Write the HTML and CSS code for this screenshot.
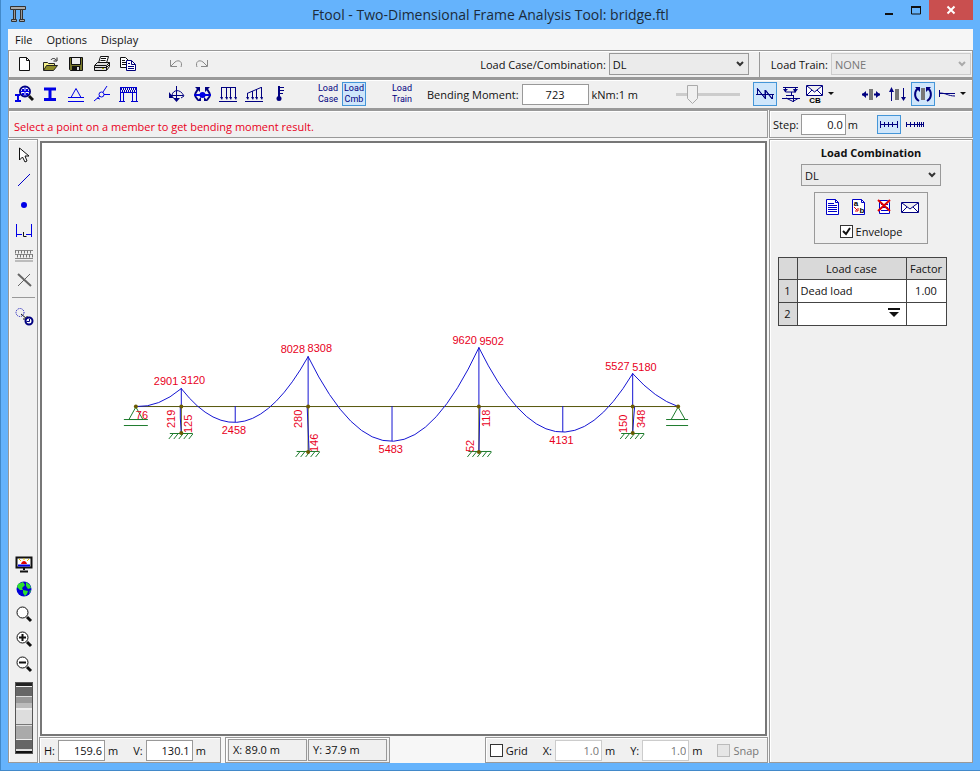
FILE: index.html
```html
<!DOCTYPE html>
<html lang="en">

<head>
    <meta charset="UTF-8">
    <meta name="viewport" content="width=device-width, initial-scale=1.0">
    <title>Ftool - bridge.ftl</title>
    <link rel="stylesheet" href="styles.css">
</head>

<body>

    <header class="titlebar">
        <svg class="logo" width="18" height="18" viewBox="0 0 18 18">
            <path d="M1.500 1.500h15v3h-15z" fill="#aaa" stroke="#333" />
            <path d="M4.500 4.500h2v10h-2zM11.500 4.500h2v10h-2z" fill="#999" stroke="#333" />
            <path d="M2.500 14.500h5v2h-5zM10.500 14.500h5v2h-5z" fill="#aaa" stroke="#333" />
        </svg>
        <h1>Ftool - Two-Dimensional Frame Analysis Tool: bridge.ftl</h1>
        <div class="window-buttons">
            <button type="button" aria-label="Minimize"><svg width="12" height="12"><path d="M2 10h8" stroke="#111" stroke-width="2" /></svg></button>
            <button type="button" aria-label="Maximize"><svg width="12" height="12"><path d="M1.500 3v7h9V3z" fill="none" stroke="#111" /><path d="M1 3h10" stroke="#111" stroke-width="2" /></svg></button>
            <button type="button" class="close" aria-label="Close"><svg width="10" height="10"><path d="M1.500 1.500l7 7M8.500 1.500l-7 7" stroke="#fff" stroke-width="2" /></svg></button>
        </div>
    </header>

    <nav class="menubar">
        <button type="button">File</button>
        <button type="button">Options</button>
        <button type="button">Display</button>
    </nav>

    <div class="toolbar file-bar">
        <div class="group">
            <button type="button" class="tool" aria-label="New"><svg width="20" height="20"><path d="M5.500 3.500h7l3 3v10h-10z" fill="#fff" stroke="#111" /><path d="M12.500 3.500v3h3" fill="none" stroke="#111" /></svg></button>
            <button type="button" class="tool" aria-label="Open"><svg width="20" height="20"><path d="M3.500 16V8.500h4l1 1h6V12" fill="#f4f08a" stroke="#222" /><path d="M3.500 16.500l3-5h11l-4 5z" fill="#8c8a28" stroke="#222" /><path d="M11 6c1-2 4-2 5 0M17 3.500v3.500h-3.500" fill="none" stroke="#222" /></svg></button>
            <button type="button" class="tool" aria-label="Save"><svg width="20" height="20"><path d="M3.500 3.500h13v13H4.500l-1-1z" fill="#77772b" stroke="#111" /><path d="M6 4h8v6H6z" fill="#eee" /><path d="M5.500 4v6.500h9V4" fill="none" stroke="#111" /><path d="M6 12h8v4H6z" fill="#111" /><path d="M11 13h2v3h-2z" fill="#ddd" /></svg></button>
            <button type="button" class="tool" aria-label="Print"><svg width="20" height="20"><path d="M6.500 9l2-6.500h8L14.500 9" fill="#fff" stroke="#111" /><path d="M9 4.500h5M8.500 6.500h5" stroke="#111" /><path d="M2.500 11.500l3-3h12v4l-3 4h-12z" fill="#ddd" stroke="#111" /><path d="M3 11.500h11.500l3-3M3 13.500h11.500l3-3M14.500 12v4" fill="none" stroke="#111" /><path d="M10 14.500h2" stroke="#aa0" /></svg></button>
            <button type="button" class="tool" aria-label="Copy"><svg width="20" height="20"><path d="M2.500 3.500h5l3 3v7h-8z" fill="#fff" stroke="#111" /><path d="M4 6.500h3M4 8.500h4M4 10.500h4" stroke="#111" /><path d="M8.500 6.500h5l4 4v6h-9z" fill="#fff" stroke="#00007b" /><path d="M13.500 6.500v4h4M10 9.500h2M10 12.500h6M10 14.500h6" fill="none" stroke="#00007b" /></svg></button>
        </div>
        <div class="group">
            <button type="button" class="tool" aria-label="Undo" disabled><svg width="20" height="20"><path d="M4.500 6v6.500H11M5 12l4-4c4-3 8 0 6 5" fill="none" stroke="#888" /></svg></button>
            <button type="button" class="tool" aria-label="Redo" disabled><svg width="20" height="20"><path d="M15.500 6v6.500H9M15 12l-4-4C7 5 3 8 5 13" fill="none" stroke="#888" /></svg></button>
        </div>
        <div class="case-field">
            <label for="loadCase">Load Case/Combination:</label>
            <select id="loadCase">
                <option>DL</option>
            </select>
        </div>
        <div class="train-field">
            <label for="loadTrain">Load Train:</label>
            <select id="loadTrain" disabled>
                <option>NONE</option>
            </select>
        </div>
    </div>

    <div class="toolbar model-bar">
        <div class="group">
            <button type="button" class="tool" aria-label="Material"><svg width="20" height="20"><circle cx="11" cy="7.500" r="5" fill="#fff" stroke="#000080" stroke-width="2" /><path d="M11 3v9M6 7.500h10" stroke="#0000e6" /><path d="M8 5h2v2H8zM12 5h2v2h-2zM8 9h2v2H8zM12 9h2v2h-2z" fill="#0000e6" /><path d="M15 12l4 4" stroke="#111" stroke-width="3" /><path d="M1 11h5M1 17h6M4 10v8" stroke="#0000e6" stroke-width="2" /></svg></button>
            <button type="button" class="tool" aria-label="Section"><svg width="20" height="20"><path d="M4 5h12M4 15.500h12" stroke="#0000e6" stroke-width="3" /><path d="M10 5v10" stroke="#0000e6" stroke-width="3" /></svg></button>
            <button type="button" class="tool" aria-label="Supports"><svg width="20" height="20"><path d="M10 4.500l-5 9h10zM2 13.500h16M2 17.500h16" fill="none" stroke="#0000e6" /></svg></button>
            <button type="button" class="tool" aria-label="Hinges"><svg width="20" height="20"><path d="M2 17l6-5M11 8l4-6M12 10.500h6" stroke="#0000e6" /><circle cx="9.500" cy="10.500" r="2.500" fill="none" stroke="#0000e6" /><path d="M5 14l3 1" stroke="#0000e6" /></svg></button>
            <button type="button" class="tool" aria-label="Rigid members"><svg width="20" height="20"><path d="M2 3.500h17M2 8.500h17M2.500 3v14M5.500 8v9M14.500 8v9M18.500 3v14M1 17.500h6M13 17.500h7" fill="none" stroke="#0000d0" /><path d="M3 5h15M4 7h14" stroke="#0000b4" stroke-width="2" stroke-dasharray="1 1" /></svg></button>
        </div>
        <div class="group">
            <button type="button" class="tool" aria-label="Nodal loads"><svg width="20" height="20"><path d="M10.500 2v15M4 11.500h13" fill="none" stroke="#000080" /><path d="M3 8l5 6H3zM7 14h7l-3.500 4z" fill="#000080" /><path d="M6 11c1-5 8-7 12 1M15 14l3-2" fill="none" stroke="#000080" /></svg></button>
            <button type="button" class="tool" aria-label="Member end moments"><svg width="20" height="20"><path d="M2 11h17" stroke="#0000e6" stroke-width="2" /><circle cx="10.500" cy="11" r="3" fill="#0000e6" /><path d="M6 5L3 10M15 5l3 5M3 12l3 4M18 12l-3 4" fill="none" stroke="#000080" stroke-width="2" /><path d="M3 3h5v5zM18 3h-5v5zM5 17h4v-4zM16 17h-4v-4z" fill="#000080" /></svg></button>
            <button type="button" class="tool" aria-label="Uniform load"><svg width="20" height="20"><path d="M3 3.500h15M3.500 3v11M8.500 3v11M12.500 3v11M17.500 3v11M1 17.500h18" stroke="#000080" /><path d="M2 13h3l-1 3zM7 13h3l-1 3zM11 13h3l-1 3zM16 13h3l-1 3z" fill="#000080" /></svg></button>
            <button type="button" class="tool" aria-label="Linear load"><svg width="20" height="20"><path d="M3 9.500L17 3.500M3.500 9v6M8.500 7v7M12.500 5v9M17.500 3v11M1 17.500h18" stroke="#000080" /><path d="M2 13h3l-1 3zM7 13h3l-1 3zM11 13h3l-1 3zM16 13h3l-1 3z" fill="#000080" /></svg></button>
            <button type="button" class="tool" aria-label="Temperature"><svg width="20" height="20"><path d="M9 2v12" stroke="#000080" stroke-width="2" /><path d="M10 3.500h4M10 6.500h4M10 9.500h3" stroke="#000080" /><circle cx="9" cy="14.500" r="2.500" fill="#000080" /></svg></button>
        </div>
        <div class="group">
            <button type="button" class="tool words">Load<br>Case</button>
            <button type="button" class="tool words selected">Load<br>Cmb</button>
        </div>
        <div class="group">
            <button type="button" class="tool words">Load<br>Train</button>
        </div>
        <div class="moment-field">
            <label for="moment">Bending Moment:</label>
            <input type="text" id="moment" value="723">
            <span>kNm:1 m</span>
        </div>
        <input type="range" class="scale" aria-label="Diagram scale" value="20" disabled>
        <div class="group results">
            <button type="button" class="tool selected" aria-label="Moment diagram"><svg width="20" height="20"><path d="M1 10.500h18M2.500 10V5l8 10V6l7 9v-5" fill="none" stroke="#000080" /><path d="M2 4l8 10V6l7 9" fill="none" stroke="#000080" /></svg></button>
            <button type="button" class="tool" aria-label="Influence line"><svg width="20" height="20"><path d="M2 3.500h15M4.500 3v5h10V3M10.500 8v3M5 11.500h8M1 14.500h18M5 14l7 3.500 5-3M12.500 12v6" fill="none" stroke="#000080" /><path d="M2 5h5l-3 3zM12 5h5l-3 4z" fill="#000080" /></svg></button>
            <button type="button" class="tool drop" aria-label="Envelope results">
                <svg width="20" height="20"><path d="M1.500 1.500h16v10h-16zM2 2l7.500 6L17 2M2 11l5-5M17 11l-5-5" fill="#fff" stroke="#000080" /><text x="10" y="19" class="icon-text">CB</text></svg>
                <svg class="arrow" width="6" height="4"><path d="M0 0h6L3 3z" fill="#111" /></svg>
            </button>
        </div>
        <div class="group forces">
            <button type="button" class="tool" aria-label="Axial force"><svg width="20" height="20"><path d="M8 5h4v11H8z" fill="#777" /><path d="M1 10.500h6M13 10.500h6" stroke="#000080" stroke-width="2" /><path d="M5 7v7l-4-3.500zM15 7v7l4-3.500z" fill="#000080" /></svg></button>
            <button type="button" class="tool" aria-label="Shear force"><svg width="20" height="20"><path d="M8 5h4v11H8z" fill="#777" /><path d="M4.500 5v12M16.500 4v12" stroke="#000080" /><path d="M2 8h5L4.500 3zM14 13h5l-2.500 4z" fill="#000080" /></svg></button>
            <button type="button" class="tool selected" aria-label="Bending moment"><svg width="20" height="20"><path d="M8 4h4v12H8z" fill="#777" /><path d="M6 17c-5-3-5-9-1-13M14 17c5-3 5-9 1-13" fill="none" stroke="#000080" stroke-width="2" /><path d="M2 3h5v5zM18 3h-5v5z" fill="#000080" /></svg></button>
            <button type="button" class="tool drop" aria-label="Deformed shape">
                <svg width="20" height="20"><path d="M2.500 6v7M2 9.500h16M3 9c6 0 8 3 15 3" fill="none" stroke="#000080" /></svg>
                <svg class="arrow" width="6" height="4"><path d="M0 0h6L3 3z" fill="#111" /></svg>
            </button>
        </div>
    </div>

    <main class="workspace">
        <p class="message panel">Select a point on a member to get bending moment result.</p>

        <div class="step panel">
            <label for="step">Step:</label>
            <input type="text" id="step" value="0.0">
            <span>m</span>
            <div class="group">
                <button type="button" class="tool selected" aria-label="Constant step"><svg width="20" height="20"><path d="M1 10.500h18M1.500 7v7M5.500 8v5M9.500 8v5M13.500 8v5M18.500 7v7" stroke="#000080" /></svg></button>
                <button type="button" class="tool" aria-label="Variable step"><svg width="20" height="20"><path d="M1 10.500h18M1.500 8v5M5.500 8v5M9.500 8v5M12.500 8v5M14.500 8v5M16.500 8v5M18.500 8v5" stroke="#000080" /></svg></button>
            </div>
        </div>

        <div class="sidebar panel">
            <button type="button" class="tool" aria-label="Select"><svg width="20" height="20"><path d="M5.500 3v12l3-3 2.500 5 2-1-2-5h4z" fill="#fff" stroke="#111" /></svg></button>
            <button type="button" class="tool" aria-label="Member"><svg width="20" height="20"><path d="M4 16L16 4" stroke="#0000c8" /></svg></button>
            <button type="button" class="tool" aria-label="Node"><svg width="20" height="20"><circle cx="10" cy="10" r="3" fill="#0000e6" /></svg></button>
            <button type="button" class="tool" aria-label="Dimension line"><svg width="20" height="20"><path d="M2.500 4v13M17.500 4v13M2 14.500h6M12 14.500h6" stroke="#0000e6" /><path d="M9.500 12v4.500h3" fill="none" stroke="#111" /></svg></button>
            <button type="button" class="tool" aria-label="Hatch" disabled><svg width="20" height="20"><path d="M1 5.500h18M1 9.500h18M1 13.500h18M1 16h18" stroke="#888" /><path d="M1 7h18M3 11h16" stroke="#777" stroke-width="3" stroke-dasharray="1 2" /></svg></button>
            <button type="button" class="tool" aria-label="Delete" disabled><svg width="20" height="20"><path d="M4 4l13 12" stroke="#666" stroke-width="2" /><path d="M16 4L4 16" stroke="#666" /></svg></button>
            <hr>
            <button type="button" class="tool" aria-label="Copy attributes"><svg width="20" height="20"><circle cx="6" cy="5.500" r="4" fill="none" stroke="#0000b4" stroke-dasharray="1 1" /><path d="M7 7l6 5M13 9v3h-4" fill="none" stroke="#111" /><circle cx="15" cy="14" r="3.500" fill="#fff" stroke="#000080" stroke-width="2" /><path d="M15.500 12v2.500h-3" fill="none" stroke="#000080" /></svg></button>

            <div class="view-tools">
                <button type="button" class="tool" aria-label="Fit view"><svg width="20" height="20"><path d="M2.500 3.500h15v10h-15z" fill="#fff" stroke="#111" stroke-width="2" /><path d="M4 11.500h12" stroke="#0000e6" stroke-width="2" /><path d="M7 10c1-4 5-4 6 0z" fill="#e00000" /><path d="M5 5l2 2M10 4v2M15 5l-2 2" stroke="#e0c000" /><path d="M10 14v2M6 17.500h8" stroke="#111" stroke-width="2" /></svg></button>
                <button type="button" class="tool" aria-label="World window"><svg width="20" height="20"><circle cx="10" cy="10" r="7.500" fill="#0000d8" /><path d="M4 5l5-2 2 3-3 3 1 2-3 0-3-3zM12 3l4 3 1 3-3 1-2-3zM9 11l5 1-1 3-2 2-2-3zM16 11l1 1-2 3z" fill="#2ee02e" /></svg></button>
                <button type="button" class="tool" aria-label="Zoom window"><svg width="20" height="20"><circle cx="8.500" cy="8.500" r="5.500" fill="#fff" stroke="#111" /><path d="M13 13l4 4" stroke="#111" stroke-width="3" /></svg></button>
                <button type="button" class="tool" aria-label="Zoom in"><svg width="20" height="20"><circle cx="8.500" cy="8.500" r="5.500" fill="#fff" stroke="#111" /><path d="M5 8.500h7M8.500 5v7" stroke="#111" stroke-width="2" /><path d="M13 13l4 4" stroke="#111" stroke-width="3" /></svg></button>
                <button type="button" class="tool" aria-label="Zoom out"><svg width="20" height="20"><circle cx="8.500" cy="8.500" r="5.500" fill="#fff" stroke="#111" /><path d="M5 8.500h7" stroke="#111" stroke-width="2" /><path d="M13 13l4 4" stroke="#111" stroke-width="3" /></svg></button>
                <div class="dial"></div>
            </div>
        </div>

        <div class="canvas-frame">
            <svg class="canvas" viewBox="41 143 724 591">
                <!-- members -->
                <path class="member" d="M135 406.500H678M180.500 406V433M307.500 406V452M478.500 406V452M632.500 406V433" />
                <!-- supports -->
                <g class="support">
                    <path d="M135 407l-7 12.500h14zM123 419.500h24M123 425.500h24" />
                    <path d="M678 407l-7 12.500h14zM666 419.500h22M666 425.500h22" />
                    <path d="M169 433.500h23M168 439l4-5M173 439l4-5M178 439l4-5M183 439l4-5M188 439l4-5" />
                    <path d="M296 451.500h23M295 457l4-5M300 457l4-5M305 457l4-5M310 457l4-5M315 457l4-5" />
                    <path d="M468 451.500h23M467 457l4-5M472 457l4-5M477 457l4-5M482 457l4-5M487 457l4-5" />
                    <path d="M621 433.500h23M620 439l4-5M625 439l4-5M630 439l4-5M635 439l4-5M640 439l4-5" />
                </g>
                <!-- bending moment diagram -->
                <g class="moment">
                    <path d="M135 406.500Q158 407.500 180.500 388.500Q244 469.600 307.500 356.500Q393 530.500 478.500 347.500Q555 502.500 632.500 373.500Q655 398.700 678 406.500" />
                    <path d="M180.500 388v18M307.500 356v50M478.500 347v59M632.500 373v33M234.500 406v16M391.500 406v35M562.500 406v26" />
                    <path d="M179.500 406v12l1 15M306.500 406l2 46M479.500 406l-1 46M634.500 406l-1 12-1 15" />
                </g>
                <g class="node">
                    <circle cx="135" cy="406.500" r="2" />
                    <circle cx="180.500" cy="406.500" r="2" />
                    <circle cx="307.500" cy="406.500" r="2" />
                    <circle cx="478.500" cy="406.500" r="2" />
                    <circle cx="632.500" cy="406.500" r="2" />
                    <circle cx="678" cy="406.500" r="2" />
                    <circle cx="180.500" cy="433" r="2" />
                    <circle cx="307.500" cy="452" r="2" />
                    <circle cx="478.500" cy="452" r="2" />
                    <circle cx="632.500" cy="433" r="2" />
                </g>
                <g class="value">
                    <text x="135" y="419">76</text>
                    <text x="153" y="385">2901</text>
                    <text x="180" y="384">3120</text>
                    <text x="221" y="434">2458</text>
                    <text x="280" y="353">8028</text>
                    <text x="307" y="352">8308</text>
                    <text x="378" y="453">5483</text>
                    <text x="452" y="344">9620</text>
                    <text x="479" y="345">9502</text>
                    <text x="549" y="444">4131</text>
                    <text x="605" y="370">5527</text>
                    <text x="632" y="371">5180</text>
                    <text transform="translate(174 428) rotate(-90)">219</text>
                    <text transform="translate(191 433) rotate(-90)">125</text>
                    <text transform="translate(301 428) rotate(-90)">280</text>
                    <text transform="translate(317 452) rotate(-90)">146</text>
                    <text transform="translate(490 427) rotate(-90)">118</text>
                    <text transform="translate(474 452) rotate(-90)">52</text>
                    <text transform="translate(627 433) rotate(-90)">150</text>
                    <text transform="translate(645 428) rotate(-90)">348</text>
                </g>
            </svg>
        </div>

        <div class="statusbar">
            <div class="limits panel">
                <label for="horizontal">H:</label>
                <input type="text" id="horizontal" value="159.6">
                <span class="unit">m</span>
                <label for="vertical">V:</label>
                <input type="text" id="vertical" value="130.1">
                <span class="unit">m</span>
            </div>
            <div class="cursor panel">
                <output>X: 89.0 m</output>
                <output>Y: 37.9 m</output>
            </div>
            <div class="grid-options panel">
                <input type="checkbox" id="grid">
                <label for="grid" class="grid-label">Grid</label>
                <label for="gridX">X:</label>
                <input type="text" id="gridX" value="1.0" disabled>
                <span class="unit">m</span>
                <label for="gridY">Y:</label>
                <input type="text" id="gridY" value="1.0" disabled>
                <span class="unit">m</span>
                <input type="checkbox" id="snap" disabled>
                <label for="snap" class="off">Snap</label>
            </div>
        </div>

        <aside class="combination panel">
            <h2><label for="combination">Load Combination</label></h2>
            <select id="combination">
                <option>DL</option>
            </select>
            <div class="combination-tools">
                <div class="group">
                    <button type="button" class="tool" aria-label="New combination"><svg width="20" height="20"><path d="M4.500 2.500h9l3 3v12h-12z" fill="#fff" stroke="#0000c8" /><path d="M13.500 2.500v3h3M6 6.500h6M6 8.500h9M6 10.500h9M6 12.500h9M6 14.500h9" fill="none" stroke="#0000c8" /></svg></button>
                    <button type="button" class="tool" aria-label="Rename combination"><svg width="20" height="20"><path d="M4.500 2.500h9l3 3v12h-12z" fill="#fff" stroke="#0000c8" /><path d="M13.500 2.500v3h3" fill="none" stroke="#0000c8" /><text x="8" y="9" class="icon-text">a</text><text x="14" y="16" class="icon-text">b</text><path d="M6 10l3 3M10 11v3H7" fill="none" stroke="#e00000" /></svg></button>
                    <button type="button" class="tool" aria-label="Delete combination"><svg width="20" height="20"><path d="M5.500 3.500h8l2 2v11h-10z" fill="#fff" stroke="#0000c8" /><path d="M7 7.500h7M7 10.500h7M7 13.500h7" stroke="#0000c8" /><path d="M4 3l12 11M16 3L4 14" stroke="#e00000" stroke-width="2" /></svg></button>
                    <button type="button" class="tool" aria-label="New envelope"><svg width="20" height="20"><path d="M1.500 5.500h17v10h-17zM2 6l8 6 8-6M2 15l5-5M18 15l-5-5" fill="#fff" stroke="#000080" /></svg></button>
                </div>
                <div class="envelope">
                    <input type="checkbox" id="envelope" checked>
                    <label for="envelope">Envelope</label>
                </div>
            </div>
            <table>
                <thead>
                    <tr>
                        <th></th>
                        <th>Load case</th>
                        <th>Factor</th>
                    </tr>
                </thead>
                <tbody>
                    <tr>
                        <th>1</th>
                        <td>Dead load</td>
                        <td class="factor">1.00</td>
                    </tr>
                    <tr>
                        <th>2</th>
                        <td class="pick"><button type="button" aria-label="Choose load case"><svg width="12" height="10"><path d="M0 1h12" stroke="#111" stroke-width="2" /><path d="M1 4h10L6 9z" fill="#111" /></svg></button></td>
                        <td class="factor"></td>
                    </tr>
                </tbody>
            </table>
        </aside>
    </main>

</body>

</html>
```
FILE: styles.css
```css
* {
    box-sizing: border-box;
}

body {
    margin: 0;
    height: 100vh;
    display: flex;
    flex-direction: column;
    padding: 0 7px 8px 8px;
    background-color: #65b3fc;
    box-shadow: inset 1px -1px #4289c9;
    font-family: "Open Sans", sans-serif;
    font-size: 11px;
    color: #111;
}

button,
input,
select {
    font: inherit;
    color: inherit;
}

button {
    padding: 0;
    border: none;
    background: none;
}

/* Title bar and menu */
.titlebar {
    display: grid;
    grid-template-columns: 120px 1fr 120px;
    height: 29px;
    flex: none;
}

.logo {
    margin: 5px 0 0 1px;
}

.titlebar h1 {
    margin: 0;
    font-size: 14px;
    font-weight: normal;
    line-height: 29px;
    text-align: center;
    color: #1c2b3a;
}

.window-buttons {
    display: flex;
    justify-content: flex-end;
    height: 20px;
}

.window-buttons button {
    width: 27px;
    display: flex;
    align-items: center;
    justify-content: center;
}

.window-buttons .close {
    width: 44px;
    background-color: #c94f4f;
}

.menubar {
    height: 21px;
    flex: none;
    display: flex;
    gap: 14px;
    padding-left: 7px;
    background-color: #f6f6f6;
}

/* Toolbars */
.toolbar,
.panel {
    background-color: #f0f0f0;
    border: 1px solid #999;
    box-shadow: inset 1px 1px #fff;
}

.toolbar {
    flex: none;
    display: flex;
    align-items: center;
    padding-left: 2px;
}

.file-bar {
    height: 29px;
    border-bottom-width: 2px;
}

.model-bar {
    height: 31px;
    padding-right: 2px;
    border-bottom-width: 2px;
}

.group {
    display: flex;
    align-items: center;
}

.toolbar .group + .group {
    margin-left: 22px;
}

.toolbar .results + .forces {
    margin-left: 20px;
}

.tool {
    width: 26px;
    height: 24px;
    flex: none;
    display: flex;
    align-items: center;
    justify-content: center;
}

.tool.selected {
    width: 24px;
    margin: 0 1px;
    background-color: #cfe6fb;
    border: 1px solid #4596d8;
}

.tool.drop {
    width: 34px;
}

.words {
    font-family: Roboto, sans-serif;
    font-size: 9px;
    line-height: 11px;
    color: #000080;
}

.icon-text {
    font-family: "Liberation Sans", sans-serif;
    font-size: 8px;
    font-weight: bold;
    text-anchor: middle;
}

select {
    appearance: none;
    height: 22px;
    padding: 0 20px 0 3px;
    border: 1px solid #999;
    border-radius: 0;
    background: #ebebeb url("data:image/svg+xml,%3Csvg xmlns='http://www.w3.org/2000/svg' width='8' height='6'%3E%3Cpath d='M1 1l3 3 3-3' fill='none' stroke='%23333' stroke-width='2'/%3E%3C/svg%3E") no-repeat right 4px center;
}

select:disabled {
    color: #777;
    opacity: 1;
    border-color: #ccc;
    background-image: url("data:image/svg+xml,%3Csvg xmlns='http://www.w3.org/2000/svg' width='8' height='6'%3E%3Cpath d='M1 1l3 3 3-3' fill='none' stroke='%23aaa' stroke-width='2'/%3E%3C/svg%3E");
}

input[type="text"] {
    height: 21px;
    padding: 0 2px;
    border: 1px solid #999;
    background-color: #fff;
    text-align: right;
}

input[type="text"]:disabled {
    color: #777;
    border-color: #ccc;
}

input[type="checkbox"] {
    appearance: none;
    width: 13px;
    height: 13px;
    margin: 0;
    border: 1px solid #333;
    background: #fff no-repeat center;
}

input[type="checkbox"]:checked {
    background-image: url("data:image/svg+xml,%3Csvg xmlns='http://www.w3.org/2000/svg' width='9' height='9'%3E%3Cpath d='M1 4l3 3 4-6' fill='none' stroke='%23111' stroke-width='2'/%3E%3C/svg%3E");
}

input[type="checkbox"]:disabled {
    border-color: #bbb;
    background-color: #e6e6e6;
}

.case-field,
.train-field,
.moment-field {
    display: flex;
    align-items: center;
    gap: 3px;
}

.case-field {
    margin-left: auto;
}

.case-field select,
.train-field select {
    width: 140px;
}

.train-field {
    height: 25px;
    margin-left: 10px;
    padding: 0 1px 0 11px;
    border-left: 1px solid #999;
}

.moment-field {
    margin-left: 12px;
}

.moment-field input[type="text"] {
    width: 67px;
    text-align: center;
}

.scale {
    appearance: none;
    width: 64px;
    height: 20px;
    margin: 0 12px 0 auto;
    background: linear-gradient(#ccc, #ccc) no-repeat center / 100% 3px;
}

.scale::-webkit-slider-thumb {
    appearance: none;
    width: 11px;
    height: 19px;
    background: url("data:image/svg+xml,%3Csvg xmlns='http://www.w3.org/2000/svg' width='11' height='19'%3E%3Cpath d='M.5.5h10v13l-5 5-5-5z' fill='%23f0f0f0' stroke='%23aaa'/%3E%3C/svg%3E") no-repeat;
}

.arrow {
    margin: 0 3px;
}

/* Work area */
.workspace {
    flex: 1;
    min-height: 0;
    display: grid;
    grid-template-columns: 30px 1fr 204px;
    grid-template-rows: 28px 1fr 26px;
    gap: 1px;
    background-color: #f7f7f7;
}

.message {
    grid-column: 1 / 3;
    margin: 0;
    padding: 4px 5px 0;
    line-height: 24px;
    color: #e8001c;
}

.step {
    display: flex;
    align-items: center;
    gap: 2px;
    padding-left: 3px;
}

.step input {
    width: 45px;
}

.step .group {
    margin-left: 16px;
}

.step .selected {
    height: 19px;
}

.sidebar {
    grid-row: 2 / 4;
    display: flex;
    flex-direction: column;
    align-items: center;
    padding: 2px 2px 8px 3px;
}

.sidebar .tool {
    height: 25px;
}

.sidebar hr {
    width: 100%;
    margin: 5px 0 6px;
    border: none;
    border-top: 1px solid #999;
}

.view-tools {
    margin-top: auto;
    display: flex;
    flex-direction: column;
    align-items: center;
}

.dial {
    width: 18px;
    height: 72px;
    margin-top: 6px;
    border: 1px solid #555;
    background: linear-gradient(#222 0 4%, #eee 4% 6%, #666 6% 18%, #ddd 18% 20%, #999 20% 28%, #bbb 28% 36%, #eee 36% 38%, #ddd 38% 58%, #777 58% 60%, #ddd 60% 62%, #aaa 62% 80%, #eee 80% 82%, #666 82% 95%, #ddd 95% 97%, #111 97%);
}

.canvas-frame {
    min-height: 0;
    margin: 2px 1px 0;
    border: 2px solid #777;
    background-color: #fff;
}

.canvas {
    display: block;
    width: 100%;
    height: 100%;
}

.member {
    fill: none;
    stroke: #55550a;
}

.support {
    fill: none;
    stroke: #1d7a2c;
}

.moment {
    fill: none;
    stroke: #1414d2;
}

.node {
    fill: #6a5a00;
}

.value {
    font-family: "Liberation Sans", sans-serif;
    font-size: 11px;
    fill: #e8001c;
}

.statusbar {
    display: flex;
    gap: 4px;
}

.statusbar .panel {
    display: flex;
    align-items: center;
    gap: 3px;
    padding: 0 4px;
}

.limits {
    width: 182px;
}

.statusbar .unit,
.grid-label {
    margin-right: 12px;
}

.limits input,
.grid-options input[type="text"] {
    width: 47px;
}

.cursor output {
    width: 79px;
    padding: 0 4px;
    border: 1px solid #999;
    line-height: 20px;
}

.statusbar .cursor {
    gap: 1px;
    padding: 0 2px;
}

.statusbar .grid-options {
    margin-left: auto;
    padding-right: 8px;
}

.off {
    color: #777;
}

/* Load combination panel */
.combination {
    grid-column: 3;
    grid-row: 2 / 4;
    display: flex;
    flex-direction: column;
    align-items: center;
}

.combination h2 {
    margin: 4px 0 3px;
    font-size: 11px;
    line-height: 17px;
}

.combination select {
    width: 140px;
}

.combination-tools {
    margin: 6px 0 13px;
    padding: 2px 4px;
    border: 1px solid #999;
}

.envelope {
    display: flex;
    align-items: center;
    justify-content: center;
    gap: 3px;
    height: 22px;
    padding-top: 2px;
}

table {
    width: 169px;
    margin-right: 18px;
    table-layout: fixed;
    border-collapse: collapse;
    background-color: #fff;
}

th,
td {
    height: 23px;
    padding: 0 3px;
    border: 1px solid #444;
    font-weight: normal;
    line-height: 20px;
}

th {
    padding: 0;
    background-color: #d9d9d9;
}

thead th {
    height: 22px;
}

th:first-child {
    width: 19px;
}

th:last-child {
    width: 40px;
}

.factor {
    text-align: center;
}

.pick {
    padding-right: 6px;
    text-align: right;
}
```
